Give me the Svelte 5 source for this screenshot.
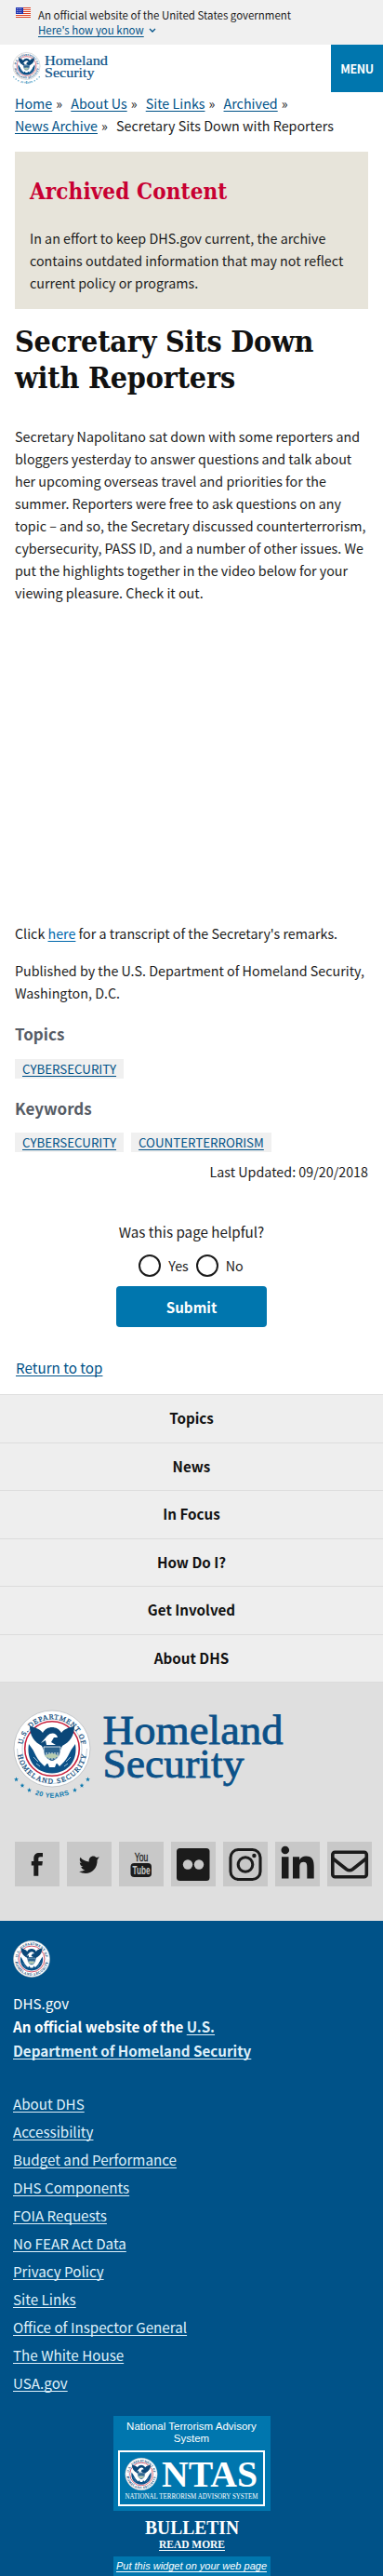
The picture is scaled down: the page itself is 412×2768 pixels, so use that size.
<script>
  const crumbs = ['Home', 'About Us', 'Site Links', 'Archived', 'News Archive'];
  const sections = ['Topics', 'News', 'In Focus', 'How Do I?', 'Get Involved', 'About DHS'];
  const links = [
    'About DHS', 'Accessibility', 'Budget and Performance', 'DHS Components', 'FOIA Requests',
    'No FEAR Act Data', 'Privacy Policy', 'Site Links', 'Office of Inspector General',
    'The White House', 'USA.gov'
  ];
  const stripes = [0, 2, 4, 6, 8, 10];
  const stars = [[-38.5, 33], [-32, 39.5], [-24.5, 44.5], [24.5, 44.5], [32, 39.5], [38.5, 33]];
</script>

{#snippet seal(id, ring)}
  <circle r="41" fill="#fff" stroke="#b9bcc0" stroke-width={ring} />
  <circle r="29.3" fill="#fff" stroke="#c8203c" stroke-width="1.6" />
  <g class="ring-text">
    <path id="{id}-arc" d="M-30.500 9.900A32 32 0 1 1 30.500 9.900" fill="none" />
    <path id="{id}-low" d="M-37.500 0A37.500 37.500 0 0 0 37.500 0" fill="none" />
    <text textLength="91"><textPath href="#{id}-arc" startOffset="50%" text-anchor="middle">U.S. DEPARTMENT OF</textPath></text>
    <text textLength="104"><textPath href="#{id}-low" startOffset="50%" text-anchor="middle">HOMELAND SECURITY</textPath></text>
  </g>
  <path d="M-25 -5C-28 12-18 26 0 26.500C18 26 28 12 25 -5L10 16H-10Z" fill="#0b5188" />
  <path d="M-24-24C-18-23-13-21-10-17C-6-25 6-25 10-17C13-21 18-23 24-24C24-14 19-7 11-3L9 2H-9L-11-3C-19-7-24-14-24-24Z" fill="#0b4778" />
  <path d="M-23-10L-11-2-9 7-2 12-8 19C-15 13-21 4-23-10ZM23-10L11-2 9 7 2 12 8 19C15 13 21 4 23-10Z" fill="#fff" />
  <path d="M-5-14C-1-18 5-17 6-12L2-12-1-7 4-4H-6L-7-9-12-6Z" fill="#fff" />
  <path d="M-9-2H9V4C8 9 4 12 0 14C-4 12-8 9-9 4Z" fill="#2c648f" stroke="#fff" stroke-width=".8" />
  <path d="M-6 4V9M-3 4V11M0 4V12M3 4V11M6 4V9" stroke="#fff" stroke-width=".9" />
  <path d="M-8 8Q0 2 7 8Q0 13-8 8Z" fill="#b7cdb0" />
  <path d="M-5 15Q0 11 5 15L3 20H-3Z" fill="#fff" />
  <path d="M-20 9l5 5M20 9l-5 5M-17 16l4 3M17 16l-4 3" stroke="#9ec1d9" stroke-width="1" />
{/snippet}

{#snippet anniversary(id)}
  <g fill="#0a78ae">
    {#each stars as [x, y]}
      <path transform="translate({x} {y})" d="M0-2.400.7-.7 2.400-.7 1 .5 1.500 2.200 0 1.200-1.500 2.200-1 .5-2.400-.7-.7-.7Z" />
    {/each}
    <path id="{id}-years" d="M-26 45.500Q0 60 26 45.500" fill="none" />
    <text class="years" textLength="38"><textPath href="#{id}-years" startOffset="50%" text-anchor="middle">20 YEARS</textPath></text>
  </g>
{/snippet}

<div class="page">
  <div class="banner">
    <svg class="flag" width="16" height="11" viewBox="0 0 16 11">
      <rect width="16" height="11" fill="#fff" />
      {#each stripes as y}<rect {y} width="16" height="1" fill="#db3e1f" />{/each}
      <rect width="8" height="7" fill="#1e33b1" />
      <path d="M1 1.500h6M1 3.500h6M1 5.500h6" stroke="#fff" stroke-width=".7" stroke-dasharray="1 1" />
    </svg>
    <div>
      <div>An official website of the United States government</div>
      <div class="know"><a href="#know">Here's how you know</a>
        <svg width="8" height="5" viewBox="0 0 8 5"><path d="M1 1l3 3 3-3" fill="none" stroke="#005288" stroke-width="1.300" /></svg>
      </div>
    </div>
  </div>

  <header>
    <svg class="brand" width="110" height="38" viewBox="0 0 110 38">
      <g transform="translate(16.500 16) scale(.355)">{@render seal('head', 1.5)}{@render anniversary('head')}</g>
      <g class="word">
        <text x="36" y="15" font-size="15" textLength="68" lengthAdjust="spacingAndGlyphs">Homeland</text>
        <text x="36" y="28" font-size="15" textLength="53.500" lengthAdjust="spacingAndGlyphs">Security</text>
      </g>
    </svg>
    <button class="menu">MENU</button>
  </header>

  <main>
    <nav class="crumbs">
      {#each crumbs as c}<span class="crumb"><a href="#top">{c}</a><i>»</i></span>{/each}<span>Secretary Sits Down with Reporters</span>
    </nav>

    <section class="archived">
      <h2>Archived Content</h2>
      <p>In an effort to keep DHS.gov current, the archive<br />contains outdated information that may not reflect<br />current policy or programs.</p>
    </section>

    <h1>Secretary Sits Down<br />with Reporters</h1>

    <p class="lead">Secretary Napolitano sat down with some reporters and<br />bloggers yesterday to answer questions and talk about<br />her upcoming overseas travel and priorities for the<br />summer. Reporters were free to ask questions on any<br />topic – and so, the Secretary discussed counterterrorism,<br />cybersecurity, PASS ID, and a number of other issues. We<br />put the highlights together in the video below for your<br />viewing pleasure. Check it out.</p>
    <div class="video"></div>
    <p>Click <a class="bright" href="#transcript">here</a> for a transcript of the Secretary's remarks.</p>
    <p class="published">Published by the U.S. Department of Homeland Security,<br />Washington, D.C.</p>

    <h3>Topics</h3>
    <div class="tags"><a href="#t">CYBERSECURITY</a></div>
    <h3>Keywords</h3>
    <div class="tags second"><a href="#t">CYBERSECURITY</a><a href="#t">COUNTERTERRORISM</a></div>
    <div class="updated">Last Updated: 09/20/2018</div>

    <form class="helpful">
      <div>Was this page helpful?</div>
      <div class="choices"><span class="radio"></span><span class="choice">Yes</span><span class="radio"></span><span class="choice">No</span></div>
      <button type="button">Submit</button>
    </form>
    <div class="return"><a href="#top">Return to top</a></div>
  </main>

  <nav class="sections">
    {#each sections as s}<a href="#s">{s}</a>{/each}
  </nav>

  <section class="grey">
    <svg class="biglogo" width="300" height="102" viewBox="0 0 300 102">
      <g transform="translate(42 43)">{@render seal('big', 0.8)}{@render anniversary('big')}</g>
      <g class="word big">
        <text x="96.500" y="37.500" font-size="45" textLength="194" lengthAdjust="spacingAndGlyphs">Homeland</text>
        <text x="96.500" y="73.500" font-size="45" textLength="152" lengthAdjust="spacingAndGlyphs">Security</text>
      </g>
    </svg>
    <div class="social">
      <svg viewBox="0 0 48 48"><path d="M30 12v4.300h-2.500c-1.700 0-2.200.8-2.200 2v2.800h4.600l-.6 4.300h-4v11.300h-5V25.400h-2.500v-4.300h2.500v-3.300c0-3.800 2.400-5.800 5.900-5.800 1.700 0 3.200 0 3.800 0Z" /></svg>
      <svg viewBox="0 0 48 48"><path d="M35 17c-.7 1-1.500 1.800-2.400 2.400C33 28 27 34 20 34c-2.500 0-4.900-.7-7-2 2.300.2 4.700-.4 6.500-1.900-2.100 0-3.700-1.400-4.200-3.200.7.100 1.400.100 2-.1-2.100-.5-3.500-2.300-3.500-4.500.6.3 1.300.5 2 .6-2-1.400-2.600-4-1.400-6.100 2.300 2.800 5.600 4.500 9.400 4.700-.8-3.200 1.600-5.900 4.600-5.900 1.300 0 2.500.6 3.300 1.500 1.100-.2 2.100-.6 3-1.200-.3 1.100-1 2-2 2.600.8-.1 1.600-.4 2.300-1.500Z" /></svg>
      <svg viewBox="0 0 48 48">
        <rect x="12.500" y="23" width="22.500" height="15" rx="3.800" />
        <text class="tube you" x="24" y="20.500" text-anchor="middle" textLength="14.500" lengthAdjust="spacingAndGlyphs">You</text>
        <text class="tube inv" x="24" y="35.300" text-anchor="middle" textLength="19" lengthAdjust="spacingAndGlyphs">Tube</text>
      </svg>
      <svg viewBox="0 0 48 48"><rect x="6" y="7" width="35.500" height="35" rx="3.500" /><circle cx="18" cy="24.500" r="5.200" fill="#c8c8c8" /><circle cx="30" cy="24.500" r="5.200" fill="#c8c8c8" /></svg>
      <svg viewBox="0 0 48 48"><g fill="none" stroke="#1b1b1b" stroke-width="3.100"><rect x="8" y="8.500" width="32" height="32" rx="8.500" /><circle cx="24" cy="24.500" r="7.800" /></g><circle cx="33.400" cy="15" r="2.200" /></svg>
      <svg viewBox="0 0 48 48"><circle cx="10.800" cy="9" r="4.300" /><path d="M7 16.200h7.500V39.500H7ZM19 16.200h7.100v3.200c1.500-2.500 4-3.800 7-3.800 7.300 0 8.600 4.800 8.600 11v12.900h-7.400V28c0-2.800 0-6.200-3.800-6.200s-4.200 3-4.200 6v11.700H19Z" /></svg>
      <svg viewBox="0 0 48 48"><g fill="none" stroke="#1b1b1b" stroke-width="3.600"><rect x="5.800" y="11.300" width="36.500" height="26.500" rx="2.500" /><path d="M6 18l14.500 11.500q3.500 2.500 7 0L42 18" /></g></svg>
    </div>
  </section>

  <footer>
    <svg class="small" width="40" height="40" viewBox="-42 -42 84 84">{@render seal('foot', 1)}</svg>
    <div class="ident">
      <div>DHS.gov</div>
      <div class="bold">An official website of the <a href="#dhs">U.S.<br />Department of Homeland Security</a></div>
    </div>
    <ul>{#each links as l}<li><a href="#l">{l}</a></li>{/each}</ul>
    <div class="ntas">
      <div class="ntas-box">
        <div class="ntas-title">National Terrorism Advisory<br />System</div>
        <svg width="158" height="60" viewBox="0 0 158 60">
          <rect x="1" y="1" width="156" height="58" fill="none" stroke="#fff" stroke-width="2" />
          <g transform="translate(25 25.500) scale(.42)">{@render seal('ntas', 1)}</g>
          <text class="trajan" x="47" y="39" font-size="41" font-weight="bold" textLength="103" lengthAdjust="spacingAndGlyphs">NTAS</text>
          <text class="trajan" x="7.500" y="52" font-size="7.500" textLength="143" lengthAdjust="spacingAndGlyphs">NATIONAL TERRORISM ADVISORY SYSTEM</text>
        </svg>
      </div>
      <svg class="bulletin" width="169" height="49" viewBox="0 0 169 49">
        <text class="trajan" x="34" y="25" font-size="21" font-weight="bold" textLength="101" lengthAdjust="spacingAndGlyphs">BULLETIN</text>
        <text class="trajan" x="49" y="39.500" font-size="12.500" font-weight="bold" textLength="71" lengthAdjust="spacingAndGlyphs">READ MORE</text>
        <path d="M49 42.500H120" stroke="#fff" />
      </svg>
      <a class="widget" href="#w">Put this widget on your web page</a>
    </div>
  </footer>
</div>

<style>
  :global(body) { background: #fff; }
  .page {
    width: 412px; height: 2768px; overflow: hidden;
    font: 14.300px/24px 'Noto Sans CJK SC', 'Open Sans', sans-serif; color: #1b1b1b;
  }
  .page * { box-sizing: border-box; }
  svg { overflow: visible; }
  p, h1, h2, h3, ul { margin: 0; padding: 0; }
  p { white-space: nowrap; }
  a { color: #005288; text-decoration-thickness: 1px; text-underline-offset: 2px; text-decoration-skip-ink: none; }
  button { font-family: inherit; border: 0; padding: 0; color: #fff; background: #0076ae; font-weight: 700; }

  .banner { height: 48px; background: #f0f0f0; padding: 8px 17px; display: flex; gap: 8px; font-size: 11.470px; line-height: 16px; }
  .flag { flex: none; }
  .know { display: flex; align-items: center; gap: 5px; }

  header { height: 51px; display: flex; justify-content: space-between; align-items: flex-start; }
  .brand { margin: 7px 0 0 12px; }
  .menu { width: 56px; height: 51px; font-size: 12.500px; letter-spacing: -.4px; }
  .word { font-family: 'Liberation Serif', serif; fill: #0b5188; stroke: #0b5188; stroke-width: .2px; }
  .big { stroke-width: .8px; }
  .ring-text { font: 7.500px 'Liberation Serif', serif; fill: #0b4778; stroke: #0b4778; stroke-width: .25px; }
  .years { font: bold 7.200px 'Liberation Sans', sans-serif; }

  main { padding: 0 16px; height: 1399px; }
  .crumbs { display: flex; flex-wrap: wrap; column-gap: 9.200px; white-space: nowrap; }
  .crumb { display: flex; gap: 4px; }
  .crumb i { font-style: normal; }

  .archived { margin-top: 16px; height: 169px; background: #e7e4da; padding: 25px 16px; }
  h2 { font: bold 24px/36px 'DejaVu Serif Condensed', 'DejaVu Serif', serif; font-stretch: condensed; letter-spacing: .1px; color: #c80032; }
  .archived p { margin-top: 20px; }
  h1 { margin-top: 16px; font: bold 32px/39px 'DejaVu Serif Condensed', 'DejaVu Serif', serif; font-stretch: condensed; letter-spacing: -.2px; color: #111; white-space: nowrap; }
  .lead { margin-top: 31px; }
  .video { height: 342px; }
  .bright { color: #0068ac; }
  .published { margin-top: 16px; }
  h3 { font-size: 17px; line-height: 24px; color: #565c65; margin-top: 20px; }
  .tags { display: flex; gap: 8px; margin-top: 15px; }
  .second { margin-top: 14px; }
  .tags a { background: #f0f0f0; height: 21px; padding: 0 8px; font-size: 13.300px; line-height: 21px; }
  .updated { text-align: right; margin-top: 9px; }
  .helpful { display: flex; flex-direction: column; align-items: center; margin-top: 40px; font-size: 15.200px; }
  .choices { display: flex; align-items: center; height: 24px; margin: 13px 0 0 7px; font-size: 14.300px; }
  .radio { width: 24px; height: 24px; border: 2px solid #1b1b1b; border-radius: 50%; }
  .choice { margin: 0 8px; line-height: 26px; }
  .helpful button { width: 162px; height: 44px; border-radius: 4px; font-size: 15.200px; margin-top: 10px; }
  .return { margin: 31px 0 0 1px; font-size: 15.200px; }

  .sections { height: 310px; background: #eee; border-top: 1px solid #dfdfdf; display: grid; grid-template-rows: repeat(6, 1fr); font-size: 15.200px; }
  .sections a { display: flex; align-items: center; justify-content: center; padding-bottom: 2px; color: #111; font-weight: 700; text-decoration: none; border-bottom: 1px solid #dcdcdc; }

  .grey { height: 256px; background: #dfdfdf; padding: 28px 14px 0; }
  .biglogo { display: block; }
  .social { display: flex; gap: 8px; margin: 41px 0 0 2px; }
  .social svg { flex: none; width: 48px; height: 48px; background: #c8c8c8; fill: #1b1b1b; }
  .tube { font: bold 12.500px 'Liberation Sans', sans-serif; }
  .you { font-weight: 400; stroke: #1b1b1b; stroke-width: .3px; }
  .inv { fill: #c8c8c8; }

  footer { height: 704px; background: #005288; color: #fff; padding: 21px 14px 0; font-size: 15.200px; }
  footer a { color: #dff0fa; }
  .small { display: block; }
  .ident { line-height: 26px; margin-top: 14px; }
  .bold { font-weight: 700; margin-top: -1px; }
  ul { list-style: none; margin-top: 29px; }
  li { height: 30px; line-height: 30px; }
  .ntas { width: 169px; margin: 21px 0 0 107.500px; }
  .ntas-box { background: #0076ae; height: 102px; padding: 5px 5.500px; }
  .ntas-title { font: 11.500px/13px 'Liberation Sans', sans-serif; text-align: center; height: 32px; }
  .trajan { font-family: 'Liberation Serif', serif; fill: #fff; }
  .bulletin { display: block; }
  .widget { display: block; height: 21px; background: #0076ae; text-align: center; white-space: nowrap; font: italic 11px/21px 'Liberation Sans', sans-serif; color: #fff; }
</style>
